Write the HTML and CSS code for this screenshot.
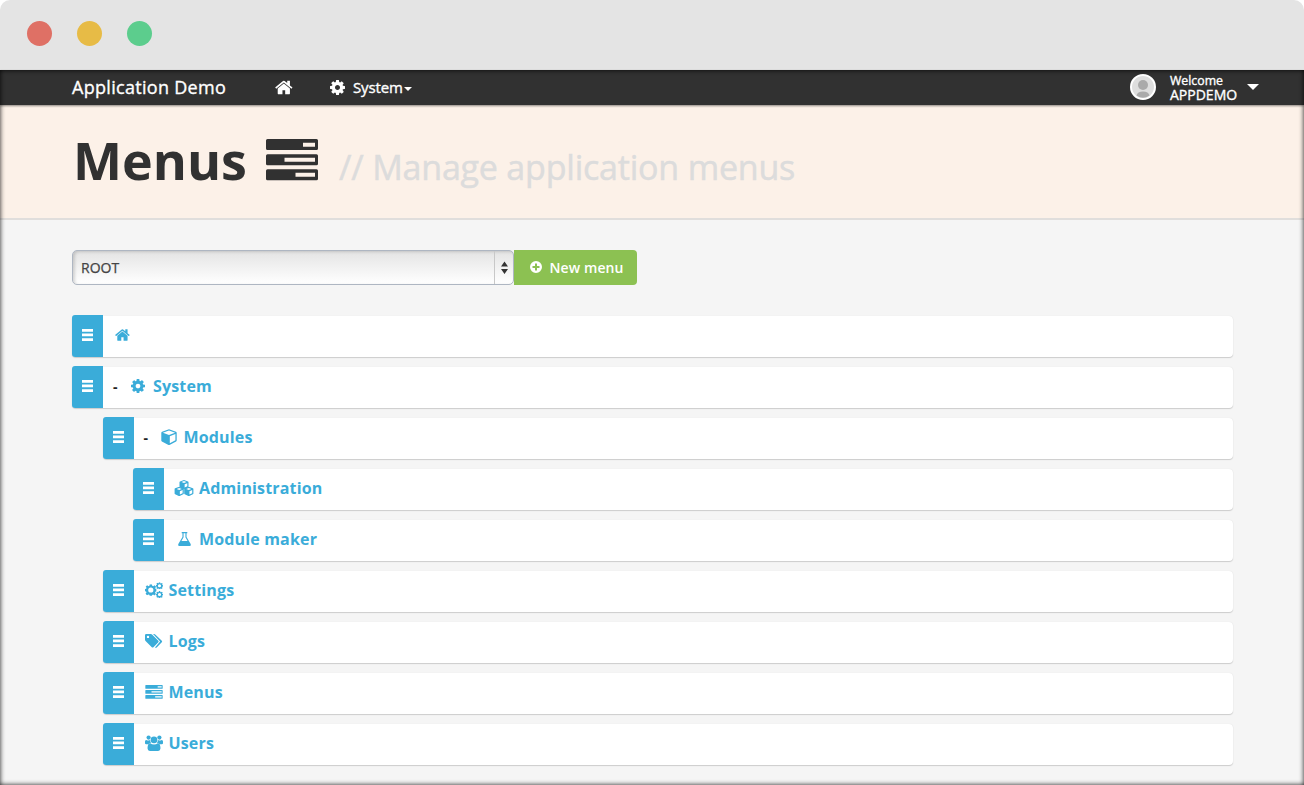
FILE: index.html
```html
<!DOCTYPE html>
<html lang="en">
<head>
<meta charset="utf-8">
<title>Application Demo</title>
<link rel="stylesheet" href="styles.css">
</head>
<body>
<svg class="sprite" aria-hidden="true">
  <symbol id="home" viewBox="0 0 1792 1792"><path d="M1408 992v480q0 26-19 45t-45 19h-384v-384h-256v384h-384q-26 0-45-19t-19-45v-480q0-1 .5-3t.5-3l575-474 575 474q1 2 1 6zm223-69l-62 74q-8 9-21 11h-3q-13 0-21-7l-692-577-692 577q-12 8-24 7-13-2-21-11l-62-74q-8-10-7-23.5t11-21.5l719-599q32-26 76-26t76 26l244 204v-195q0-14 9-23t23-9h192q14 0 23 9t9 23v408l219 182q10 8 11 21.5t-7 23.5z"/></symbol>
  <symbol id="cog" viewBox="128 128 1536 1536"><path d="M1152 896q0-106-75-181t-181-75-181 75-75 181 75 181 181 75 181-75 75-181zm512-109v222q0 12-8 23t-20 13l-185 28q-19 54-39 91 35 50 107 138 10 12 10 25t-9 23q-27 37-99 108t-94 71q-12 0-26-9l-138-108q-44 23-91 38-16 136-29 186-7 28-36 28h-222q-14 0-24.500-8.500t-11.500-21.500l-28-184q-49-16-90-37l-141 107q-10 9-25 9-14 0-25-11-126-114-165-168-7-10-7-23 0-12 8-23 15-21 51-66.500t54-70.500q-27-50-41-99l-183-27q-13-2-21-12.500t-8-23.500v-222q0-12 8-23t19-13l186-28q14-46 39-92-40-57-107-138-10-12-10-24 0-10 9-23 26-36 98.500-107.500t94.500-71.500q13 0 26 10l138 107q44-23 91-38 16-136 29-186 7-28 36-28h222q14 0 24.500 8.500t11.500 21.500l28 184q49 16 90 37l142-107q9-9 24-9 13 0 25 10 129 119 165 170 7 8 7 22 0 12-8 23-15 21-51 66.500t-54 70.500q26 50 41 98l183 28q13 2 21 12.500t8 23.500z"/></symbol>
  <symbol id="gear" viewBox="0 0 12 12"><path fill-rule="evenodd" d="M4.900 0h2.200l.4 1.700 1 .4 1.500-.9L11.500 2.700l-.9 1.300.4 1 1 .2v2.200l-1.200.3-.4 1 .9 1.400-1.500 1.500-1.400-.9-1 .4-.3 1.100H4.900l-.4-1.200-1-.4-1.400.9L.6 10l.9-1.400-.4-1L0 7.300V5l1.200-.2.4-1L.7 2.600 2.200 1.100l1.400.9 1-.4zM6 3.300a2.700 2.700 0 1 0 0 5.400 2.700 2.700 0 0 0 0-5.400z"/></symbol>
  <symbol id="tasks" viewBox="0 0 52 42"><path fill-rule="evenodd" d="M1.500 0h49q1.500 0 1.500 1.500v8q0 1.500-1.500 1.500h-49Q0 11 0 9.500v-8Q0 0 1.500 0zM37 3.800v4h12v-4zM1.500 15.200h49q1.500 0 1.500 1.500v8q0 1.500-1.500 1.500h-49Q0 26.200 0 24.700v-8q0-1.500 1.500-1.500zm17 3.600v4H49v-4zM1.500 30.200h49q1.500 0 1.500 1.500v8q0 1.500-1.500 1.500h-49Q0 41.200 0 39.700v-8q0-1.500 1.500-1.500zM29.500 33.700v4H49v-4z"/></symbol>
  <symbol id="cube" viewBox="0 0 16 16"><path fill-rule="evenodd" d="M8 .3 15 2.800q.7.300.7 1v7.600q0 .7-.6 1L8.500 15.900q-.5.200-1 0L.9 12.400q-.6-.3-.6-1V3.800q0-.7.700-1zM8 1.600 1.900 3.800 8 6l6.100-2.200zM8.800 14.200l5.600-2.900V5.100L8.800 7.200z"/></symbol>
  <symbol id="minicube" viewBox="0 0 10 10"><path fill-rule="evenodd" d="M5 0 9.400 1.700q.6.300.6.900v4.600q0 .7-.6 1L5.500 9.900q-.5.200-1 0L.6 8.200q-.6-.3-.6-1V2.600q0-.6.600-.9zM5 1.200 2.200 2.300 5 3.400l2.800-1.100zM5.700 8.400l3-1.400V3.600l-3 1.200z"/></symbol>
  <symbol id="cubes" viewBox="0 0 20 16"><use href="#minicube" x="5.100" y="0" width="9.800" height="9"/><use href="#minicube" x="0" y="6.800" width="10.400" height="9.200"/><use href="#minicube" x="9.600" y="6.800" width="10.400" height="9.200"/></symbol>
  <symbol id="flask" viewBox="0 0 14 15"><path fill-rule="evenodd" d="M4 0h6v1.200H9.200v4.200l4.300 7.300q1 2.300-1 2.300h-11q-2 0-1-2.300l4.300-7.300V1.200H4zM6 1.200v4.500L3.700 9.700h6.600L8 5.700V1.200z"/></symbol>
  <symbol id="cogs" viewBox="0 0 18 16"><use href="#gear" x="0" y="2.200" width="11.600" height="11.600"/><use href="#gear" x="11" y=".2" width="7" height="7"/><use href="#gear" x="11" y="9" width="7" height="7"/></symbol>
  <symbol id="tags" viewBox="0 0 18 15"><path fill-rule="evenodd" d="M1.200.5h4.600q.8 0 1.500.7l6 6q.8.800 0 1.600l-4.900 4.900q-.8.800-1.600 0l-6-6Q0 7 0 6.200V1.700Q0 .5 1.200.5zM3 2.200a1.200 1.200 0 1 0 0 2.400 1.200 1.200 0 0 0 0-2.400z"/><path d="M8 .5h1q.8 0 1.500.7l6.300 6q.8.800 0 1.600l-5.100 5.100q-.9.800-1.700 0l5.100-5.900-6.100-6.500z"/></symbol>
  <symbol id="users" viewBox="0 0 18 16"><circle cx="3.600" cy="2.600" r="2.100"/><circle cx="14.400" cy="2.600" r="2.100"/><circle cx="9" cy="4.900" r="3.300"/><path d="M0 8.200V6.500Q.1 4.800 1.200 4.900q2.400 1 4 .2Q5.200 7 6 8q-1.700 0-2.700 1.200H1.200Q0 9.200 0 8.200zM18 8.200V6.500q-.1-1.700-1.200-1.600-2.400 1-4 .2Q12.800 7 12 8q1.700 0 2.700 1.200h2.100q1.200 0 1.200-1zM5.200 8.200q1.700 1.400 3.800 1.400t3.800-1.400q2.600.2 2.700 5-.1 2.600-2.400 2.800H4.900q-2.300-.2-2.400-2.800.1-4.800 2.700-5z"/></symbol>
  <symbol id="bars" viewBox="0 0 11 12"><path d="M0 0h11v2.700H0zM0 4.600h11v2.700H0zM0 9.200h11v2.700H0z"/></symbol>
  <symbol id="plus" viewBox="0 0 12 12"><path fill-rule="evenodd" d="M6 0a6 6 0 1 1 0 12A6 6 0 0 1 6 0zM5 2.500V5H2.500v2H5v2.500h2V7h2.500V5H7V2.500z"/></symbol>
</svg>
<div class="window">
  <header class="chrome"><i class="dot red"></i><i class="dot yellow"></i><i class="dot green"></i></header>
  <div class="page">
    <nav class="navbar">
      <a class="brand">Application Demo</a>
      <a class="nav-home"><svg class="i-home"><use href="#home"/></svg></a>
      <a class="nav-system"><svg class="i-cog"><use href="#cog"/></svg><span>System</span><i class="caret small"></i></a>
      <div class="user">
        <svg class="avatar" viewBox="0 0 26 26"><circle cx="13" cy="13" r="12" fill="#dedede" stroke="#fff" stroke-width="2"/><circle cx="13" cy="11" r="5" fill="#aaa"/><path d="M6.500 21.500Q7.500 17.500 13 17.500t6.500 4Q13 26 6.500 21.500z" fill="#aaa"/></svg>
        <div class="welcome"><span>Welcome</span><span class="uname">APPDEMO</span></div>
        <i class="caret"></i>
      </div>
    </nav>
    <section class="hero"><h1>Menus</h1><svg class="i-hero"><use href="#tasks"/></svg><p>// Manage application menus</p></section>
    <main class="content">
      <div class="toolbar">
        <div class="select"><span>ROOT</span><svg viewBox="0 0 7 12"><path d="M3.500 0 7 5H0zM0 7.500h7l-3.500 5z"/></svg></div>
        <button class="new"><svg><use href="#plus"/></svg>New menu</button>
      </div>
      <ul class="tree">
        <li class="row l0"><b class="handle"><svg><use href="#bars"/></svg></b><svg class="ic home"><use href="#home"/></svg></li>
        <li class="row l0"><b class="handle"><svg><use href="#bars"/></svg></b><i class="fold">-</i><svg class="ic cog"><use href="#cog"/></svg><a>System</a></li>
        <li class="row l1"><b class="handle"><svg><use href="#bars"/></svg></b><i class="fold">-</i><svg class="ic cube"><use href="#cube"/></svg><a>Modules</a></li>
        <li class="row l2"><b class="handle"><svg><use href="#bars"/></svg></b><svg class="ic cubes"><use href="#cubes"/></svg><a>Administration</a></li>
        <li class="row l2"><b class="handle"><svg><use href="#bars"/></svg></b><svg class="ic flask"><use href="#flask"/></svg><a>Module maker</a></li>
        <li class="row l1"><b class="handle"><svg><use href="#bars"/></svg></b><svg class="ic wide"><use href="#cogs"/></svg><a>Settings</a></li>
        <li class="row l1"><b class="handle"><svg><use href="#bars"/></svg></b><svg class="ic wide"><use href="#tags"/></svg><a>Logs</a></li>
        <li class="row l1"><b class="handle"><svg><use href="#bars"/></svg></b><svg class="ic wide tasks"><use href="#tasks"/></svg><a>Menus</a></li>
        <li class="row l1"><b class="handle"><svg><use href="#bars"/></svg></b><svg class="ic wide"><use href="#users"/></svg><a>Users</a></li>
      </ul>
    </main>
  </div>
</div>
</body>
</html>
```
FILE: styles.css
```css
* { box-sizing: border-box; }
body { margin: 0; background: #fff; font-family: "Open Sans", sans-serif; overflow: hidden; }
svg { fill: currentColor; flex: none; }
.sprite { position: absolute; width: 0; height: 0; }
.window { height: 785px; display: flex; flex-direction: column; border-radius: 10px 10px 0 0; overflow: hidden; }
.chrome { height: 70px; background: #e4e4e4; display: flex; align-items: center; gap: 25px; padding: 0 27px 3px; flex: none; }
.dot { width: 25px; height: 25px; border-radius: 50%; }
.red { background: #df7065; }
.yellow { background: #e7bb46; }
.green { background: #5ccd8d; }
.page { flex: 1; position: relative; background: #f5f5f5; }
.page::after { content: ""; position: absolute; inset: 0; box-shadow: inset 0 0 5px rgba(0,0,0,.9); pointer-events: none; }
.navbar { height: 35px; background: #313131; color: #fff; display: flex; align-items: center; padding: 0 45px 1px 72px; box-shadow: 0 1px 2px rgba(0,0,0,.45); position: relative; -webkit-text-stroke: .35px #fff; }
.brand { font-size: 18px; letter-spacing: .3px; width: 203px; white-space: nowrap; }
.nav-home { width: 55px; display: flex; }
.i-home { width: 19px; height: 19px; }
.nav-system { display: flex; align-items: center; font-size: 15px; letter-spacing: -.15px; }
.i-cog { width: 15px; height: 15px; margin-right: 8px; }
.caret { border: 6px solid transparent; border-top-color: #fff; border-bottom: 0; }
.caret.small { border-width: 4px 4px 0; margin-left: 1px; margin-top: 3px; }
.user { margin-left: auto; display: flex; align-items: center; }
.avatar { width: 26px; height: 26px; margin-right: 14px; }
.welcome { display: flex; flex-direction: column; font-size: 12.300px; line-height: 15px; width: 77px; }
.uname { font-size: 14px; line-height: 14px; letter-spacing: 0; }
.hero { height: 115px; background: #fcf1e8; border-bottom: 2px solid #e0dedc; display: flex; align-items: baseline; padding: 20px 0 0 73px; }
.hero h1 { margin: 0; font-size: 52px; line-height: 70px; color: #313131; width: 193px; }
.i-hero { width: 52px; height: 42px; color: #313131; position: relative; top: 1px; }
.hero p { margin: 0 0 0 21px; font-size: 34px; letter-spacing: -.2px; color: #dcdcdc; -webkit-text-stroke: .5px #dcdcdc; }
.content { padding: 30px 71px 0 72px; }
.toolbar { display: flex; height: 35px; }
.select { width: 442px; border: 1px solid #aeb6c2; border-radius: 5px; background: linear-gradient(#e4e4e4, #fff); box-shadow: inset 2px 1px 3px rgba(0,0,0,.15); display: flex; align-items: center; justify-content: space-between; font-size: 14px; color: #444; padding-left: 8px; -webkit-text-stroke: .25px #444; }
.select svg { width: 19px; height: 33px; padding: 10px 5px 10px 6px; border-left: 1px solid #c8c8c8; color: #333; }
.new { border: 0; width: 123px; background: #8cc152; color: #fff; font: 600 14px "Open Sans", sans-serif; letter-spacing: .1px; border-radius: 0 4px 4px 0; display: flex; align-items: center; justify-content: center; gap: 7px; padding: 0 0 1px 3px; }
.new svg { width: 12px; height: 12px; }
.tree { list-style: none; margin: 30.500px 0 0; padding: 0; display: grid; gap: 10px; }
.row { height: 41px; background: #fff; border-radius: 4px; box-shadow: 0 1px 1px #ccc, 0 0 1px #ddd; display: flex; align-items: center; color: #3aacd9; }
.l1 { margin-left: 30.500px; }
.l2 { margin-left: 61px; }
.handle { width: 31px; height: 41.500px; background: #3aacd9; border-radius: 3px 0 0 3px; display: grid; place-items: center; color: #fff; padding-bottom: 3px; }
.handle svg { width: 11px; height: 12px; }
.row a { font-size: 16px; letter-spacing: .16px; font-weight: 700; line-height: 22px; padding-bottom: 3px; }
.fold { width: 16px; margin-left: 10px; color: #222; font-size: 14px; font-weight: 700; font-style: normal; padding-bottom: 2px; }
.ic { height: 16px; margin-bottom: 3px; }
.home { width: 16px; margin-left: 12px; }
.cog { width: 14px; height: 14px; margin: 0 8px 3px 2px; }
.cube { width: 16px; margin-right: 7px; margin-left: 1px; }
.cubes { width: 20px; margin-left: 10px; margin-right: 5px; }
.flask { width: 13px; height: 14px; margin-left: 14px; margin-right: 8px; }
.wide { width: 18px; margin-left: 11px; margin-right: 6px; }
.tasks { height: 14px; width: 18px; }
```
